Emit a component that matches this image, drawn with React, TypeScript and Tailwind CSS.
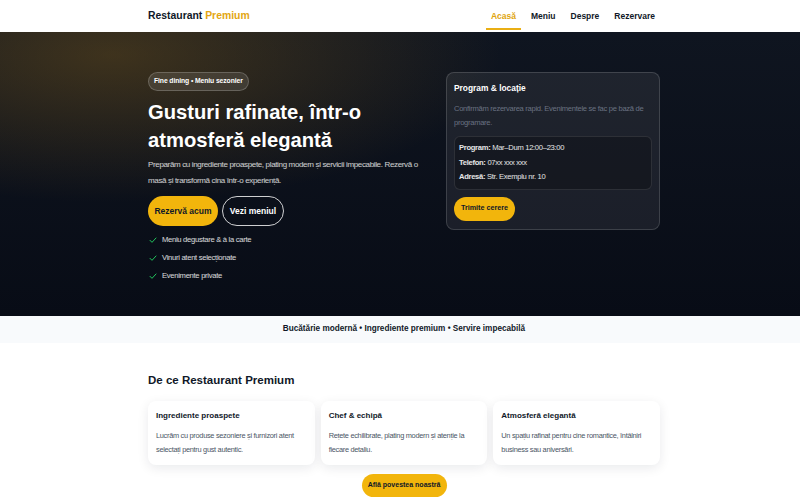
import React from 'react';

const font = { fontFamily: '"Liberation Sans", Arial, sans-serif' };

const navLinks = ['Acasă', 'Meniu', 'Despre', 'Rezervare'];

const perks = ['Meniu degustare & à la carte', 'Vinuri atent selecționate', 'Evenimente private'];

const features = [
  { title: 'Ingrediente proaspete', text: 'Lucrăm cu produse sezoniere și furnizori atent selectați pentru gust autentic.' },
  { title: 'Chef & echipă', text: 'Rețete echilibrate, plating modern și atenție la fiecare detaliu.' },
  { title: 'Atmosferă elegantă', text: 'Un spațiu rafinat pentru cine romantice, întâlniri business sau aniversări.' },
];

const Check = () => (
  <svg width="8" height="8" viewBox="0 0 24 24" fill="none" stroke="#22c55e" strokeWidth="3" strokeLinecap="round" strokeLinejoin="round">
    <path d="M3 13l6 6L21 6" />
  </svg>
);

export default function App() {
  return (
    <div style={font} className="w-[800px] min-h-[500px] bg-white text-gray-900">
      {/* top bar */}
      <header className="h-8 bg-white">
        <div className="ml-[148px] flex h-full w-[512px] items-center justify-between">
          <div className="text-[10.4px] font-bold">
            Restaurant <span className="text-[#e3a612]">Premium</span>
          </div>
          <nav className="flex h-full items-stretch gap-[5px] text-[8.5px] font-bold">
            {navLinks.map((l, i) => (
              <a
                key={l}
                className={
                  i === 0
                    ? 'relative flex items-center px-[5px] text-[#e0a40e] after:absolute after:bottom-[2px] after:left-0 after:right-0 after:h-[2px] after:bg-[#e9ae14]'
                    : 'flex items-center px-[5px]'
                }
              >
                {l}
              </a>
            ))}
          </nav>
        </div>
      </header>

      {/* hero */}
      <section className="h-[284px] bg-[radial-gradient(ellipse_at_14%_8%,rgba(140,100,25,0.38),transparent_40%),linear-gradient(180deg,#0f1520,#080c16)]">
        <div className="ml-[148px] flex w-[512px] justify-between pt-10">
          <div className="w-[290px]">
            <span className="flex h-[19px] w-fit items-center rounded-full border border-white/20 bg-white/10 px-[5px] text-[6.8px] font-bold tracking-[-0.1px] text-white">
              Fine dining • Meniu sezonier
            </span>
            <h1 className="mt-[7px] text-[20.2px] font-bold leading-[28px] text-white">
              Gusturi rafinate, într-o atmosferă elegantă
            </h1>
            <p className="mt-[3px] w-[285px] text-[8px] leading-4 tracking-[-0.35px] text-white/80">
              Preparăm cu ingrediente proaspete, plating modern și servicii impecabile. Rezervă o masă și transformă cina într-o experiență.
            </p>
            <div className="mt-[7px] flex gap-1">
              <button className="h-[30px] w-[70px] rounded-full bg-[#f2b50c] text-[8.5px] font-bold text-gray-900">Rezervă acum</button>
              <button className="h-[30px] w-[62px] rounded-full border border-white/80 text-[8.5px] font-bold text-white">Vezi meniul</button>
            </div>
            <ul className="mt-[5px] text-[7.6px] tracking-[-0.28px] text-white/85">
              {perks.map(p => (
                <li key={p} className="flex h-[18px] items-center gap-[5px] pl-px">
                  <Check />
                  {p}
                </li>
              ))}
            </ul>
          </div>

          <aside className="w-[214px] self-start rounded-lg border border-white/15 bg-white/[0.07] px-[7px] pt-[9px] pb-2">
            <h3 className="text-[8.4px] font-bold leading-3 text-white">Program &amp; locație</h3>
            <p className="mt-2 text-[7.6px] leading-[14px] tracking-[-0.3px] text-gray-500">
              Confirmăm rezervarea rapid. Evenimentele se fac pe bază de programare.
            </p>
            <div className="mt-[6px] rounded-md border border-white/10 bg-black/25 px-1 py-1 text-[7.6px] leading-[14.5px] tracking-[-0.3px] text-white/90">
              <div><b>Program:</b> Mar–Dum 12:00–23:00</div>
              <div><b>Telefon:</b> 07xx xxx xxx</div>
              <div><b>Adresă:</b> Str. Exemplu nr. 10</div>
            </div>
            <button className="mt-[7px] h-6 w-[61px] rounded-full bg-[#f2b50c] text-[7.2px] font-bold text-gray-900">Trimite cerere</button>
          </aside>
        </div>
      </section>

      {/* tagline strip */}
      <div className="flex h-[27px] items-center justify-center bg-slate-50 pl-2 text-[8.2px] font-bold">
        Bucătărie modernă • Ingrediente premium • Servire impecabilă
      </div>

      {/* why us */}
      <section className="ml-[148px] w-[512px] pt-[29px]">
        <h2 className="text-[11.5px] font-bold leading-4">De ce Restaurant Premium</h2>
        <div className="mt-[13px] grid grid-cols-3 gap-[6px]">
          {features.map(f => (
            <div key={f.title} className="h-16 rounded-lg bg-white px-2 pt-[9px] shadow-[0_3px_12px_rgba(15,23,42,0.09)]">
              <h4 className="text-[8px] font-bold leading-3">{f.title}</h4>
              <p className="mt-[7px] text-[7.4px] leading-[14px] tracking-[-0.3px] text-gray-600">{f.text}</p>
            </div>
          ))}
        </div>
        <div className="mt-[9px] flex justify-center">
          <button className="h-[23px] w-[85px] rounded-full bg-[#f2b50c] text-[7px] font-bold text-gray-900">Află povestea noastră</button>
        </div>
      </section>
    </div>
  );
}
